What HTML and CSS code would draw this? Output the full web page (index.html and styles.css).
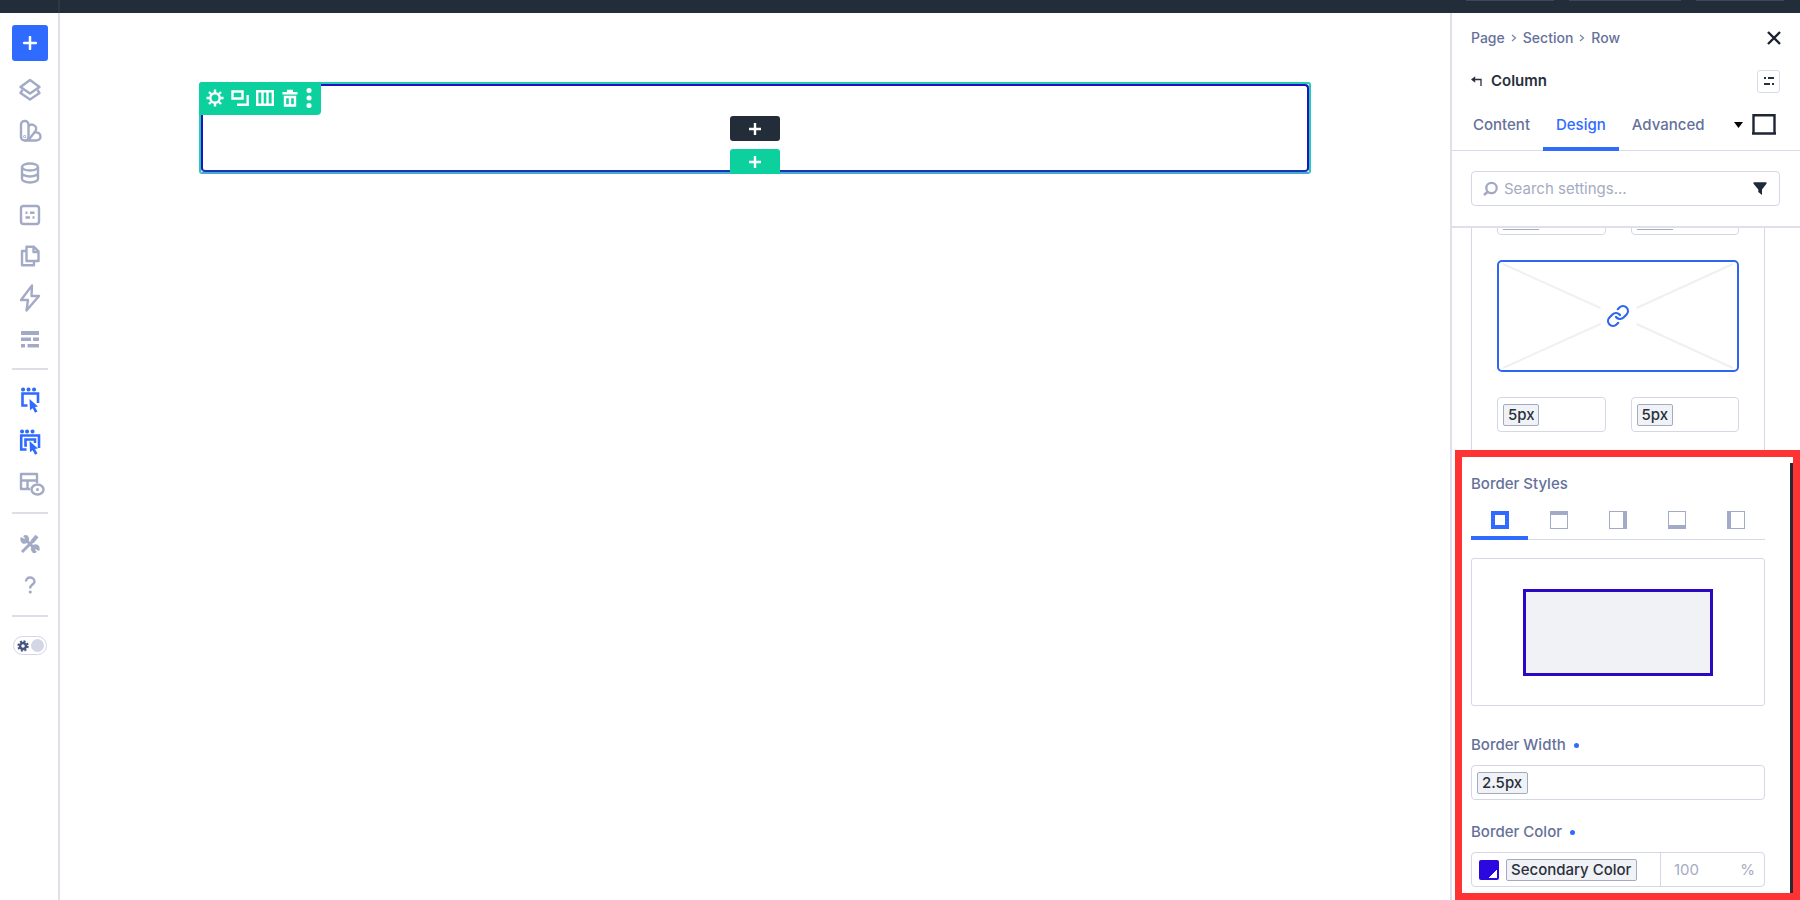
FILE: index.html
```html
<!DOCTYPE html>
<html lang="en">
<head>
    <meta charset="UTF-8">
    <meta name="viewport" content="width=device-width, initial-scale=1.0">
    <title>Column Settings</title>
    <link rel="stylesheet" href="styles.css">
</head>
<body>
    <header class="topbar">
        <div class="topbar-left"></div>
        <div class="topbar-actions">
            <span class="topbar-item"></span>
            <span class="topbar-item wide"></span>
            <span class="topbar-item"></span>
        </div>
    </header>

    <div class="builder">
        <nav class="rail">
            <button class="add" aria-label="Add">
                <svg width="14" height="14" viewBox="0 0 14 14"><path d="M7 1v12M1 7h12" stroke="#fff" stroke-width="2.500" stroke-linecap="round"/></svg>
            </button>

            <div class="rail-group tools">
                <button aria-label="Layers">
                    <svg width="24" height="24" viewBox="0 0 24 24"><path d="M12 2 21.500 9 12 15.500 2.500 9Z"/><path d="M4.500 12 2.500 15 12 21.500 21.500 15 19.500 12"/></svg>
                </button>
                <button aria-label="Design variables">
                    <svg width="24" height="24" viewBox="0 0 24 24"><rect x="3" y="2" width="7.500" height="19.500" rx="3.500"/><path d="M10.500 7.500c1-1.500 3-2.500 5-1.500 2.500 1 3.500 3.500 2 6l-7 9"/><path d="M17 13.500c3-.5 5.500 1 5.500 4 0 2.500-2 4-4.500 4H7"/><circle cx="6.700" cy="17.500" r=".4"/></svg>
                </button>
                <button aria-label="Data">
                    <svg width="24" height="24" viewBox="0 0 24 24"><ellipse cx="12" cy="6" rx="8" ry="3.500"/><path d="M4 6v12c0 1.900 3.600 3.500 8 3.500s8-1.600 8-3.500V6M4 12c0 1.900 3.600 3.500 8 3.500s8-1.600 8-3.500"/></svg>
                </button>
                <button aria-label="Presets">
                    <svg width="24" height="24" viewBox="0 0 24 24"><rect x="3" y="3" width="18" height="18" rx="2.500"/><path d="M7.500 9.800h2M12 9.800h4.500M7.500 14.500h4.500M14.500 14.500h2"/></svg>
                </button>
                <button aria-label="Pages">
                    <svg width="24" height="24" viewBox="0 0 24 24"><path d="M8.500 2.800h7.500l4.500 4.500V17h-12Z"/><path d="M15.500 3v5h5M8 7H4v14.200h12V17.500"/></svg>
                </button>
                <button aria-label="Interactions">
                    <svg width="24" height="28" viewBox="0 0 24 28"><path d="M14 1.500 3 16h7L8.500 26.500 21 12h-7.500Z"/></svg>
                </button>
                <button aria-label="Options">
                    <svg class="solid" width="24" height="24" viewBox="0 0 24 24"><path d="M3 4h18v4H3ZM3 10.500h10v3.600H3ZM15 10.500h6v3.600h-6ZM3 17h4v3.600H3ZM9.500 17H21v3.600H9.500Z"/></svg>
                </button>
            </div>

            <div class="rail-group modes">
                <button class="active" aria-label="Select element">
                    <svg width="24" height="28" viewBox="0 0 24 28"><path class="dots" d="M5 3.500h.1M10.500 3.500h.1M16 3.500h.1"/><path d="M9.500 19.500H4.500v-12H20V17"/><path class="fill" d="m11.500 13 8.500 7.500-3 .5 2.500 4.500-2.500 1.300-2.300-4.500-2.700 2Z"/></svg>
                </button>
                <button class="active" aria-label="Select parent">
                    <svg width="24" height="28" viewBox="0 0 24 28"><path class="dots" d="M4 3.500h.1M9 3.500h.1M14.500 3.500h.1"/><path d="M8.500 21.500H3.200V7.500h17.800V20M9 17.500H7.500V11.500h9.500V15"/><path class="fill" d="m11.500 13 8.500 7.500-3 .5 2.500 4.500-2.500 1.300-2.300-4.500-2.700 2Z"/></svg>
                </button>
                <button aria-label="Preview layout">
                    <svg width="30" height="26" viewBox="0 0 30 26"><path d="M15 18H6V3h16v9M6 9.500h16M12.500 9.500V18"/><ellipse cx="22.500" cy="18.500" rx="6" ry="5" fill="#fff"/><circle class="fill" cx="22.500" cy="18.500" r="1.500"/></svg>
                </button>
            </div>

            <div class="rail-group help">
                <button aria-label="Tools">
                    <svg width="24" height="24" viewBox="0 0 24 24"><path d="m4 20 11-11" stroke-width="3"/><path d="m14 10 5-6" stroke-width="4"/><path d="m8 8 8 8" stroke-width="3"/><path d="M6 3.500 8.500 6 6.500 8.500 3.500 6.500c-.5 3 2 5 5 3.500 1.500-1.500 2-4-.5-6.500M18 20.500 15.500 18l2-2.500 3 2c.5-3-2-5-5-3.500-1.500 1.500-2 4 .5 6.500"/></svg>
                </button>
                <button aria-label="Help">
                    <svg width="24" height="24" viewBox="0 0 24 24"><path d="M8 8.500c0-2.500 1.800-4 4-4s4.500 1.500 4.500 4c0 3-4.300 3-4.300 6.500v.5"/><path d="M12.200 19h.1" stroke-width="3" stroke-linecap="round"/></svg>
                </button>
            </div>

            <label class="theme">
                <input type="checkbox" aria-label="Dark mode">
                <svg width="12" height="12" viewBox="0 0 12 12"><circle cx="6" cy="6" r="3" fill="none" stroke="#47557f" stroke-width="2.500"/><circle cx="6" cy="6" r="4.700" fill="none" stroke="#47557f" stroke-width="2" stroke-dasharray="2 1.690"/></svg>
                <span class="knob"></span>
            </label>
        </nav>

        <main class="canvas">
            <section class="column">
                <div class="column-body">
                    <div class="column-toolbar">
                        <button aria-label="Settings"><svg width="18" height="18" viewBox="0 0 18 18"><circle cx="9" cy="9" r="4.700"/><path d="M9 .5v3M9 14.500v3M.5 9h3M14.500 9h3M3 3l2 2M13 13l2 2M3 15l2-2M13 5l2-2"/></svg></button>
                        <button aria-label="Duplicate"><svg width="18" height="18" viewBox="0 0 18 18"><path d="M1.500 2.500h10v7h-10ZM16.700 6v9.700H6"/></svg></button>
                        <button aria-label="Columns"><svg width="18" height="18" viewBox="0 0 18 18"><path d="M1.200 2.200h15.600v13.600H1.200ZM6.500 2v14M11.500 2v14"/></svg></button>
                        <button aria-label="Delete"><svg width="18" height="18" viewBox="0 0 18 18"><path d="M1.500 4.200h15M6 2h6M4 8h10v8.500H4ZM9 8v8"/></svg></button>
                        <button aria-label="More"><svg width="6" height="20" viewBox="0 0 6 20"><path class="more-dots" d="M3 2.500h.1M3 10h.1M3 17.500h.1"/></svg></button>
                    </div>
                    <button class="insert" aria-label="Add module"><svg width="14" height="14" viewBox="0 0 14 14"><path d="M7 1v12M1 7h12"/></svg></button>
                    <button class="insert row" aria-label="Add row"><svg width="14" height="14" viewBox="0 0 14 14"><path d="M7 1v12M1 7h12"/></svg></button>
                </div>
            </section>
        </main>

        <aside class="panel">
            <div class="panel-head">
                <div class="crumbs">
                    <a href="#">Page</a>
                    <svg width="6" height="8" viewBox="0 0 6 8"><path d="m1 1 3.500 3L1 7"/></svg>
                    <a href="#">Section</a>
                    <svg width="6" height="8" viewBox="0 0 6 8"><path d="m1 1 3.500 3L1 7"/></svg>
                    <a href="#">Row</a>
                    <button class="close" aria-label="Close"><svg width="14" height="14" viewBox="0 0 14 14"><path d="m1 1 12 12M13 1 1 13" stroke="#1b2330" stroke-width="2.400"/></svg></button>
                </div>
                <div class="title">
                    <svg width="12" height="11" viewBox="0 0 12 11"><path d="M3 3.500h7V10" fill="none" stroke="#28303c" stroke-width="1.300"/><path d="M4.200.3v6.400L0 3.500Z" fill="#28303c"/></svg>
                    <h1>Column</h1>
                    <button class="preset" aria-label="Presets"><svg width="12" height="10" viewBox="0 0 12 10"><path d="M1 2h2M5 2h6M1 8h6M9 8h2" stroke="#28303c" stroke-width="2"/></svg></button>
                </div>
                <div class="tabs">
                    <button>Content</button>
                    <button class="current">Design</button>
                    <button>Advanced</button>
                    <button class="state" aria-label="State">
                        <svg width="9" height="6" viewBox="0 0 9 6"><path d="M0 0h9L4.500 6Z" fill="#05070a"/></svg>
                        <svg width="24" height="21" viewBox="0 0 24 21"><path d="M1.500 20V1.200h21V20M0 19.500h24" fill="none" stroke="#1d2632" stroke-width="2.400"/></svg>
                    </button>
                </div>
            </div>

            <div class="search">
                <label class="field">
                    <svg width="15" height="15" viewBox="0 0 15 15"><circle cx="8.500" cy="7" r="5.200" fill="none" stroke="#a2a9c2" stroke-width="2.300"/><path d="m1 14 4-3.500" stroke="#a2a9c2" stroke-width="2.500"/></svg>
                    <input type="text" placeholder="Search settings...">
                    <svg width="14" height="13" viewBox="0 0 14 13"><path d="M.5.3h13v1.500L9 7.500V13L5.300 10V7.500L.5 1.800Z" fill="#202936"/></svg>
                </label>
            </div>

            <div class="settings">
                <div class="corners">
                    <div class="pair clipped">
                        <div class="field"><span class="chip-edge"></span></div>
                        <div class="field"><span class="chip-edge"></span></div>
                    </div>
                    <button class="link" aria-label="Link corners">
                        <svg class="cross" viewBox="0 0 237 108" preserveAspectRatio="none"><path d="M4 2 101 46M233 2 137 46M4 106 101 62M233 106 137 62"/></svg>
                        <svg class="chain" width="24" height="24" viewBox="0 0 24 24"><path d="M10 13a5 5 0 0 0 7.540.54l3-3a5 5 0 0 0-7.070-7.070l-1.720 1.710"/><path d="M14 11a5 5 0 0 0-7.540-.54l-3 3a5 5 0 0 0 7.070 7.070l1.710-1.710"/></svg>
                    </button>
                    <div class="pair">
                        <div class="field"><input class="chip" type="text" value="5px" aria-label="Bottom left radius"></div>
                        <div class="field"><input class="chip" type="text" value="5px" aria-label="Bottom right radius"></div>
                    </div>
                </div>

                <h2 class="label">Border Styles</h2>
                <div class="sides">
                    <button class="all" aria-label="All sides"><span></span></button>
                    <button class="top" aria-label="Top"><span></span></button>
                    <button class="right" aria-label="Right"><span></span></button>
                    <button class="bottom" aria-label="Bottom"><span></span></button>
                    <button class="left" aria-label="Left"><span></span></button>
                </div>
                <div class="preview"><div class="preview-box"></div></div>

                <label class="label" for="border-width">Border Width <i class="dot"></i></label>
                <div class="field">
                    <input class="chip medium" type="text" id="border-width" value="2.5px">
                </div>

                <label class="label" for="border-color">Border Color <i class="dot"></i></label>
                <div class="field color">
                    <button class="swatch" aria-label="Pick color"></button>
                    <input class="chip long" type="text" id="border-color" value="Secondary Color">
                    <div class="opacity">
                        <input type="text" value="100" aria-label="Opacity">
                        <span>%</span>
                    </div>
                </div>
            </div>

            <div class="scrollbar"></div>
            <div class="highlight"></div>
        </aside>
    </div>
</body>
</html>
```
FILE: styles.css
```css
* {
    box-sizing: border-box;
}

body {
    margin: 0;
    height: 100vh;
    display: flex;
    flex-direction: column;
    overflow: hidden;
    font-family: Inter, "Liberation Sans", sans-serif;
    font-size: 15px;
    line-height: 20px;
    color: #28303c;
    background-color: #fff;
}

button {
    display: flex;
    align-items: center;
    justify-content: center;
    padding: 0;
    border: none;
    background: none;
    font: inherit;
    color: inherit;
    cursor: pointer;
}

input {
    font: inherit;
    color: inherit;
    border: none;
    outline: none;
    min-width: 0;
    padding: 0;
    background: none;
}

h1, h2 {
    margin: 0;
    font-size: 15px;
}

svg {
    flex: none;
}

/* top bar */
.topbar {
    display: flex;
    justify-content: space-between;
    height: 13px;
    flex: none;
    background-color: #222d39;
}

.topbar-left {
    width: 60px;
    border-right: 2px solid #2d3844;
}

.topbar-actions {
    display: flex;
    gap: 15px;
    padding-right: 16px;
}

.topbar-item {
    width: 88px;
    height: 1px;
    background-color: #3c4a58;
}

.topbar-item.wide {
    width: 112px;
}

.builder {
    display: flex;
    flex: 1;
    min-height: 0;
}

/* left rail */
.rail {
    display: flex;
    flex-direction: column;
    align-items: center;
    width: 60px;
    padding: 12px 0 0 2px;
    border-right: 2px solid #dfe0ec;
}

.add {
    width: 36px;
    height: 36px;
    border-radius: 3px;
    background-color: #2f6bff;
}

.rail-group {
    display: flex;
    flex-direction: column;
    width: 36px;
    border-bottom: 2px solid #dddeea;
}

.rail-group button {
    flex: 1;
}

.rail-group svg {
    fill: none;
    stroke: #a3aac5;
    stroke-width: 2.4;
    stroke-linejoin: round;
}

.rail-group .active svg {
    stroke: #2f6bff;
    stroke-width: 2.6;
    stroke-linejoin: miter;
}

.rail-group .solid, .rail-group .fill {
    fill: #a3aac5;
    stroke: none;
}

.rail-group .active .fill {
    fill: #2f6bff;
}

.rail-group .dots {
    stroke-width: 4;
    stroke-linecap: round;
}

.tools {
    height: 301px;
    margin-top: 8px;
    padding-bottom: 8px;
}

.modes {
    height: 144px;
    padding: 9px 0 7px;
}

.help {
    height: 103px;
    padding: 10px 0;
}

.theme {
    display: flex;
    align-items: center;
    justify-content: space-between;
    position: relative;
    width: 34px;
    height: 19px;
    margin-top: 19px;
    padding: 0 2px 0 3px;
    border: 1px solid #d4d6e4;
    border-radius: 10px;
}

.theme input {
    position: absolute;
    inset: 0;
    margin: 0;
    opacity: 0;
}

.knob {
    width: 13px;
    height: 13px;
    border-radius: 50%;
    background-color: #d3d6e5;
}

/* canvas */
.canvas {
    flex: 1;
    padding: 69px 139px;
}

.column {
    border: 2px solid #25cdb0;
    border-bottom-color: #50a5d8;
    border-radius: 3px;
}

.column-body {
    display: flex;
    flex-direction: column;
    align-items: center;
    gap: 8px;
    position: relative;
    padding-top: 30px;
    border: 2px solid #2010c8;
    border-bottom-color: #0e3cae;
    border-radius: 4px;
}

.column-toolbar {
    display: flex;
    align-items: center;
    gap: 7px;
    position: absolute;
    top: -4px;
    left: -4px;
    height: 33px;
    padding: 0 9px 2px 7px;
    border-radius: 4px 0 4px 0;
    background-color: #0dd09f;
}

.column-toolbar svg, .insert svg {
    fill: none;
    stroke: #fff;
    stroke-width: 2.4;
}

.column-toolbar .more-dots {
    stroke-width: 5;
    stroke-linecap: round;
}

.insert {
    width: 50px;
    height: 25px;
    border-radius: 3px;
    background-color: #222d39;
}

.insert.row {
    margin-bottom: -4px;
    border-radius: 3px 3px 0 0;
    background-color: #0dd09f;
}

/* settings panel */
.panel {
    display: flex;
    flex-direction: column;
    position: relative;
    width: 350px;
    border-left: 2px solid #dfe0ec;
}

.panel-head {
    border-bottom: 1px solid #d9dbe8;
}

.crumbs {
    display: flex;
    align-items: center;
    gap: 6px;
    height: 50px;
    padding: 0 19px;
    font-size: 14px;
    font-weight: 500;
}

.crumbs a {
    color: #65719a;
    text-decoration: none;
}

.crumbs > svg {
    fill: none;
    stroke: #7e88aa;
    stroke-width: 1.3;
}

.close {
    margin-left: auto;
}

.title {
    display: flex;
    align-items: center;
    gap: 8px;
    height: 36px;
    padding: 0 20px 0 19px;
}

.title h1 {
    font-weight: 600;
}

.preset {
    width: 23px;
    height: 23px;
    margin-left: auto;
    border: 1px solid #d9dbe8;
    border-radius: 3px;
}

.tabs {
    display: flex;
    height: 52px;
    margin-bottom: -1px;
    padding: 0 24px 0 8px;
    font-weight: 500;
    color: #65719a;
}

.tabs button {
    padding: 3px 13px 0;
    border-bottom: 4px solid transparent;
}

.tabs .current {
    color: #2f6bff;
    border-bottom-color: #2f6bff;
}

.tabs .state {
    gap: 9px;
    margin-left: auto;
    padding: 3px 0 0;
}

.search {
    padding: 20px 20px 20px 19px;
    border-bottom: 2px solid #dfe0ec;
}

.field {
    display: flex;
    align-items: center;
    flex: 1;
    height: 35px;
    padding: 0 5px;
    border: 1px solid #d5d7e6;
    border-radius: 4px;
}

.search .field {
    gap: 6px;
    padding: 0 12px 0 11px;
}

.search input {
    flex: 1;
}

.search input::placeholder {
    color: #a5abc2;
}

.settings {
    flex: 1;
    min-height: 0;
    overflow: hidden;
    padding: 0 35px 0 19px;
}

.corners {
    display: flex;
    flex-direction: column;
    gap: 25px;
    padding: 0 25px 20px;
    border: 1px solid #d5d7e6;
    border-top: none;
}

.pair {
    display: flex;
    gap: 25px;
}

/* first row is scrolled under the search bar */
.clipped {
    align-items: flex-end;
    height: 7px;
    overflow: hidden;
}

.chip-edge {
    width: 36px;
    height: 24px;
    border-bottom: 1px solid #a3aac5;
}

.chip {
    width: 36px;
    height: 22px;
    padding: 0 4px;
    border: 1px solid #a3aac5;
    border-radius: 2px;
    background-color: #f0f2f6;
    font-weight: 500;
}

.chip.medium {
    width: 51px;
}

.chip.long {
    width: 131px;
}

.link {
    position: relative;
    width: 100%;
    height: 112px;
    border: 2px solid #2f66ee;
    border-radius: 5px;
}

.cross {
    position: absolute;
    inset: 0;
    width: 100%;
    height: 100%;
    stroke: #f0f0f1;
    stroke-width: 2;
}

.chain {
    fill: none;
    stroke: #2f66ee;
    stroke-width: 2.2;
    stroke-linecap: round;
}

.label {
    display: flex;
    align-items: center;
    gap: 8px;
    height: 20px;
    margin-bottom: 10px;
    font-weight: 500;
    color: #65719a;
}

h2.label {
    margin: 21px 0 12px;
}

.dot {
    width: 5px;
    height: 5px;
    border-radius: 50%;
    background-color: #2f6bff;
}

.sides {
    display: flex;
    gap: 2px;
    height: 34px;
    border-bottom: 1px solid #d5d7e6;
}

.sides button {
    flex: 1;
    height: 34px;
    padding-bottom: 2px;
    border-bottom: 4px solid transparent;
}

.sides .all {
    border-bottom-color: #2f6bff;
}

.sides span {
    width: 18px;
    height: 18px;
    border: 1px solid #a3aac5;
}

.sides .all span {
    border: 4px solid #2f6bff;
}

.sides .top span {
    border-top-width: 4px;
}

.sides .right span {
    border-right-width: 4px;
}

.sides .bottom span {
    border-bottom-width: 4px;
}

.sides .left span {
    border-left-width: 4px;
}

.preview {
    display: flex;
    align-items: center;
    justify-content: center;
    height: 148px;
    margin: 18px 0 29px;
    border: 1px solid #d5d7e6;
    border-radius: 3px;
}

.preview-box {
    width: 65%;
    height: 87px;
    border: 3px solid #2b08c4;
    background-color: #f0f2f6;
}

.settings > .field {
    margin-bottom: 22px;
}

.color {
    gap: 7px;
    padding: 0 9px 0 7px;
}

.swatch {
    width: 20px;
    height: 20px;
    border-radius: 2px;
    background: linear-gradient(135deg, transparent 50%, #fff 50%) 10px 10px / 8px 8px no-repeat #2b08e0;
}

.opacity {
    display: flex;
    align-items: center;
    justify-content: space-between;
    flex: 1;
    height: 100%;
    margin-left: 16px;
    padding-left: 13px;
    border-left: 1px solid #d5d7e6;
    color: #a5abc2;
}

.opacity input {
    width: 40px;
}

.scrollbar {
    position: absolute;
    top: 450px;
    right: 7px;
    bottom: 7px;
    width: 3px;
    background-color: #252a35;
}

/* marks the border settings */
.highlight {
    position: absolute;
    top: 437px;
    right: 0;
    bottom: 0;
    left: 3px;
    border: 7px solid #ff3333;
    pointer-events: none;
}
```
